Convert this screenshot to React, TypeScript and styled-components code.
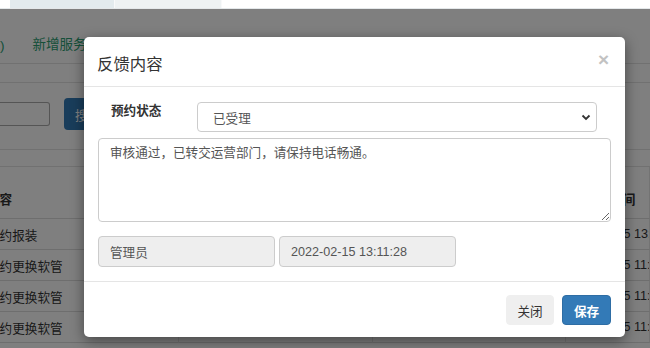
import React from 'react';
import styled, { createGlobalStyle } from 'styled-components';

const GlobalStyle = createGlobalStyle`
  html, body {
    margin: 0;
    padding: 0;
    background: #ffffff;
    font-family: "Liberation Sans", "Noto Sans CJK SC", sans-serif;
    font-size: 12.6px;
    color: #333;
  }
  * { box-sizing: border-box; }
`;

const Page = styled.div`
  width: 650px;
  height: 348px;
  overflow: hidden;
  display: flex;
  flex-direction: column;
`;

const TabStrip = styled.div`
  height: 9px;
  flex: none;
  display: flex;
  padding-left: 10px;
  background: #ffffff;
  border-bottom: 1px solid #e4e8ea;
`;

const Tab = styled.div<{ $active?: boolean }>`
  width: ${(p) => (p.$active ? 105 : 107)}px;
  background: ${(p) => (p.$active ? '#e3ebee' : '#eef2f3')};
  border-right: 1px solid #f8f9fa;
`;

const Frame = styled.div`
  position: relative;
  flex: 1;
  overflow: hidden;
  background: #ffffff;
`;

const NavRow = styled.div`
  height: 55px;
  display: flex;
  align-items: flex-end;
  gap: 28px;
  padding-bottom: 10px;
  border-bottom: 1px solid #e2e2e2;
  font-size: 13.5px;
  color: #2a9e72;
`;

const SubBar = styled.div`
  height: 19px;
  border-bottom: 1px solid #e2e2e2;
`;

const SearchRow = styled.div`
  height: 67px;
  display: flex;
  align-items: center;
  gap: 14px;
  padding-bottom: 4px;
  border-bottom: 1px solid #e2e2e2;
`;

const SearchInput = styled.div`
  width: 50px;
  height: 24px;
  border: 1px solid #aaa;
  border-left: none;
  border-radius: 0 3px 3px 0;
`;

const SearchButton = styled.div`
  width: 48px;
  height: 32px;
  background: #337ab7;
  border-radius: 4px;
  color: #fff;
  padding: 7px 11px;
`;

const Spacer = styled.div`
  height: 17px;
  border-bottom: 1px solid #e2e2e2;
`;

const Table = styled.div`
  margin-left: -21px;
  display: grid;
  grid-template-columns: 200px 1fr 1fr 84px;
`;

const Cell = styled.div<{ $head?: boolean; $indent?: number }>`
  height: ${(p) => (p.$head ? 52 : 31)}px;
  padding: 0 0 0 ${(p) => p.$indent ?? 8}px;
  display: flex;
  align-items: ${(p) => (p.$head ? 'flex-end' : 'center')};
  padding-bottom: ${(p) => (p.$head ? 10 : 0)}px;
  font-weight: ${(p) => (p.$head ? 700 : 400)};
  border-bottom: 1px solid #dcdcdc;
  border-right: 1px solid #e6e6e6;
  white-space: nowrap;
  overflow: hidden;
  color: #333;
`;

const Overlay = styled.div`
  position: absolute;
  inset: 0;
  background: rgba(0, 0, 0, 0.5);
`;

const Modal = styled.div`
  position: absolute;
  left: 84px;
  top: 28px;
  width: 541px;
  background: #fff;
  border-radius: 5px;
  box-shadow: 0 4px 14px rgba(0, 0, 0, 0.45);
  display: flex;
  flex-direction: column;
`;

const Header = styled.div`
  height: 50px;
  padding: 0 14px 0 13px;
  display: flex;
  align-items: center;
  justify-content: space-between;
  border-bottom: 1px solid #e5e5e5;
`;

const Title = styled.h4`
  margin: 2px 0 0;
  font-size: 16.4px;
  font-weight: 400;
  color: #333;
`;

const Close = styled.span`
  font-size: 19px;
  font-weight: 700;
  line-height: 1;
  color: #c2c2c2;
  margin: -4px 2px 0 0;
`;

const Body = styled.div`
  padding: 15px 14px 14px 14px;
  display: flex;
  flex-direction: column;
  gap: 6px;
`;

const FieldRow = styled.div`
  display: grid;
  grid-template-columns: 99px 1fr;
  padding-right: 14px;
`;

const Label = styled.label`
  padding: 1px 0 0 13px;
  font-weight: 700;
  line-height: 17px;
  color: #333;
`;

const SelectBox = styled.div`
  position: relative;
  height: 30px;
  border: 1px solid #ccc;
  border-radius: 4px;
  padding: 0 15px;
  display: flex;
  align-items: center;
  color: #555;
`;

const Chevron = styled.svg`
  position: absolute;
  right: 5px;
  top: 11px;
`;

const TextArea = styled.textarea`
  height: 84px;
  width: 100%;
  resize: vertical;
  border: 1px solid #ccc;
  border-radius: 4px;
  padding: 6px 11px;
  font-family: inherit;
  font-size: 12.6px;
  line-height: 1.42;
  color: #555;
  margin: 0;
`;

const InfoRow = styled.div`
  margin-top: 8px;
  display: flex;
  gap: 4px;
`;

const ReadOnlyInput = styled.input`
  width: 177px;
  height: 31px;
  background: #eeeeee;
  border: 1px solid #ccc;
  border-radius: 4px;
  padding: 0 11px;
  font-family: inherit;
  font-size: 12.6px;
  color: #555;
  outline: none;
`;

const Footer = styled.div`
  border-top: 1px solid #e5e5e5;
  padding: 13px 14px 12px;
  display: flex;
  justify-content: flex-end;
  gap: 8px;
`;

const Button = styled.button<{ $primary?: boolean }>`
  height: 30px;
  width: ${(p) => (p.$primary ? 49 : 48)}px;
  padding: 0;
  border-radius: 4px;
  border: 1px solid ${(p) => (p.$primary ? '#2e6da4' : '#efefef')};
  background: ${(p) => (p.$primary ? '#337ab7' : '#efefef')};
  color: ${(p) => (p.$primary ? '#fff' : '#333')};
  font-family: inherit;
  font-size: 12.6px;
  font-weight: ${(p) => (p.$primary ? 700 : 400)};
`;

const rows = ['预约报装', '预约更换软管', '预约更换软管', '预约更换软管'];

export default function App() {
  return (
    <Page>
      <GlobalStyle />
      <TabStrip>
        <Tab $active />
        <Tab />
      </TabStrip>
      <Frame>
        <NavRow>
          <span>)</span>
          <span>新增服务</span>
        </NavRow>
        <SubBar />
        <SearchRow>
          <SearchInput />
          <SearchButton>搜索</SearchButton>
        </SearchRow>
        <Spacer />
        <Table>
          <Cell $head>内容</Cell>
          <Cell $head>状态</Cell>
          <Cell $head>处理人</Cell>
          <Cell $head $indent={19}>预约时间</Cell>
          {rows.map((r, i) => (
            <React.Fragment key={i}>
              <Cell>{r}</Cell>
              <Cell>已受理</Cell>
              <Cell>管理员</Cell>
              <Cell $indent={0}>{i === 0 ? '2022-02-15 13:11:28' : '2022-02-15 11:20:05'}</Cell>
            </React.Fragment>
          ))}
        </Table>
        <Overlay />
        <Modal>
          <Header>
            <Title>反馈内容</Title>
            <Close>×</Close>
          </Header>
          <Body>
            <FieldRow>
              <Label>预约状态</Label>
              <SelectBox>
                已受理
                <Chevron width="10" height="7" viewBox="0 0 10 7">
                  <path d="M1.5 1.5 L5 5 L8.5 1.5" fill="none" stroke="#333" strokeWidth="1.8" />
                </Chevron>
              </SelectBox>
            </FieldRow>
            <TextArea defaultValue="审核通过，已转交运营部门，请保持电话畅通。" />
            <InfoRow>
              <ReadOnlyInput readOnly value="管理员" />
              <ReadOnlyInput readOnly value="2022-02-15 13:11:28" />
            </InfoRow>
          </Body>
          <Footer>
            <Button>关闭</Button>
            <Button $primary>保存</Button>
          </Footer>
        </Modal>
      </Frame>
    </Page>
  );
}
